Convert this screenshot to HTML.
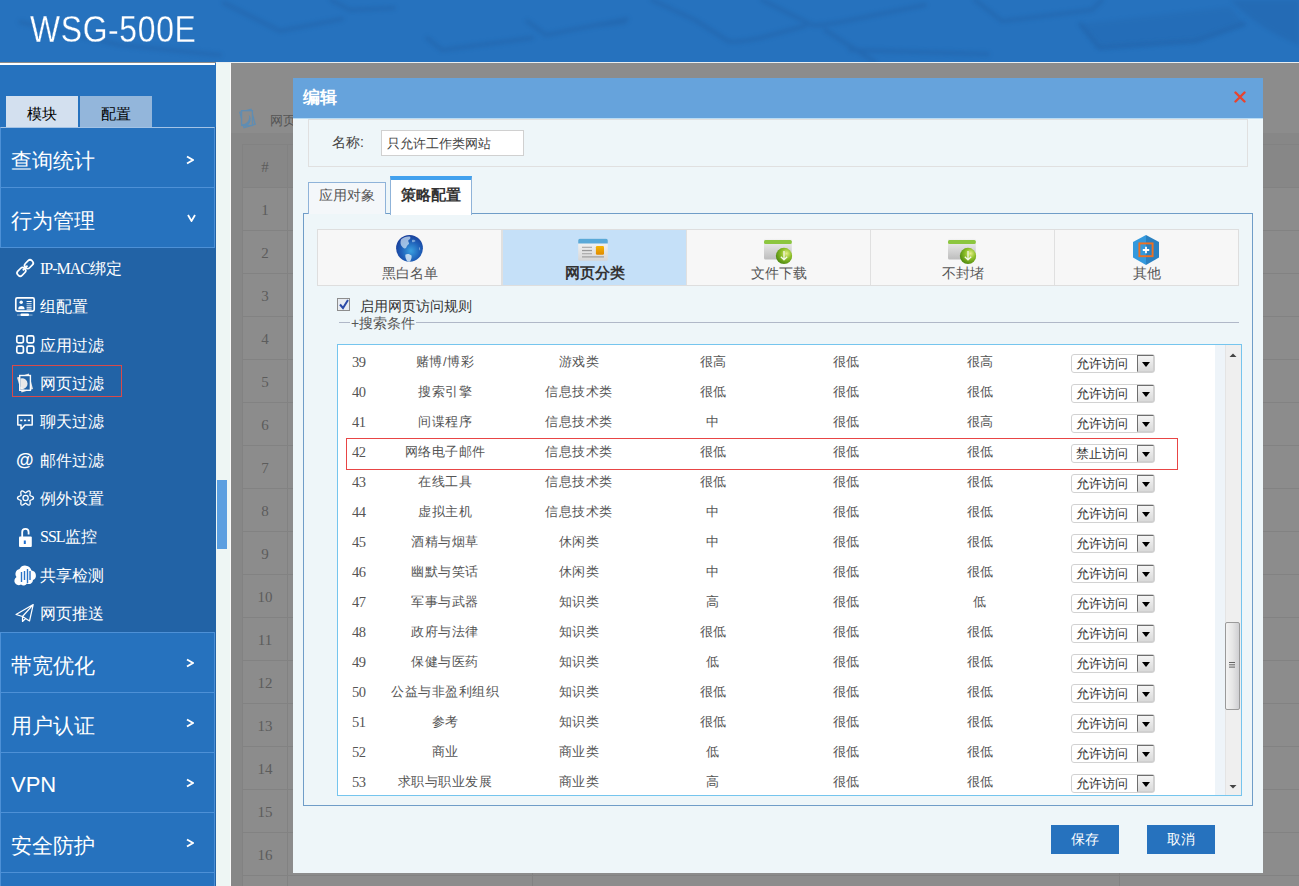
<!DOCTYPE html>
<html><head><meta charset="utf-8">
<style>
*{margin:0;padding:0;box-sizing:border-box}
html,body{width:1299px;height:886px;overflow:hidden;background:#8c8c8c;font-family:"Liberation Sans",sans-serif}
.a{position:absolute}
#hdr{left:0;top:0;width:1299px;height:62px;background:#2672be;overflow:hidden}
#title{left:30px;top:9px;font-size:37px;color:#fff;white-space:nowrap;transform:scaleX(0.86);transform-origin:0 0;letter-spacing:0.8px;-webkit-text-stroke:0.3px #2672be}
#side{left:0;top:63px;width:216px;height:823px;background:#2263a6}
#sidetop{left:0;top:63px;width:216px;height:64px;background:#2672be}
#wline{left:0;top:63px;width:215px;height:2px;background:#fff}
.tab{top:96px;height:31px;font-size:15px;color:#000;text-align:center;line-height:35px}
.mi{left:0;width:215px;height:61px;border:1px solid #4d90d6;background:#2672be;color:#fff;font-size:21px}
.mi .t{position:absolute;left:10px;top:19px;white-space:nowrap}
.mi .ar{position:absolute;left:185px;top:27px;line-height:0}
#sub{left:0;top:248px;width:216px;height:384px;background:#2263a6}
.si{position:absolute;left:0;width:216px;height:38px;color:#fff;font-size:16px}
.si .t{position:absolute;left:40px;top:11px;white-space:nowrap}
.si .t b{font-weight:normal;font-family:'Liberation Serif',serif;font-size:16px;letter-spacing:-1px}
.si svg{position:absolute}
#strip{left:216px;top:62px;width:14px;height:824px;background:#eef6f4}
#wl2{left:230px;top:63px;width:1px;height:823px;background:#fafafa}
#handle{left:217px;top:480px;width:10px;height:69px;background:#5b9fe0}
/* background page */
#main{left:231px;top:63px;width:1068px;height:823px;background:#878787;overflow:hidden}
.bgr{position:absolute;left:11px;width:1100px;height:44px;border:1px solid #828282;background:#8c8c8c}
.bgr.hd{background:#878787}
.bgr span{position:absolute;left:0;width:44px;top:14px;text-align:center;font-family:"Liberation Serif",serif;font-size:15px;color:#5c5c5c}
.bgr:before{content:"";position:absolute;left:44px;top:0;width:1px;height:43px;background:#828282}
.bgr:after{content:"";position:absolute;left:289px;top:0;width:1px;height:43px;background:#828282}
#vl3{left:888px;top:81px;width:1px;height:800px;background:#828282}
/* dialog */
#dlg{left:293px;top:78px;width:970px;height:795px;background:#eef6f9;overflow:hidden}
#dh{left:0;top:0;width:970px;height:41px;background:#66a3dc;border-bottom:1px solid #b9dcf5}
#dt{left:10px;top:8px;font-size:17px;font-weight:bold;color:#fff}
#close{left:941px;top:13px}
#fs{left:15px;top:41px;width:940px;height:48px;border:1px solid #e0e0e0}
#lbl{left:39px;top:56px;font-size:14px;color:#444}
#inp{left:88px;top:52px;width:143px;height:26px;background:#fff;border:1px solid #d0d0d0;font-size:13px;color:#444;padding:4px 0 0 5px}
.tb{position:absolute;height:32px;border:1px solid #8fb3d9;border-bottom:none;text-align:center}
#tb1{left:15px;top:104px;width:78px;background:#f4f7fa;font-size:14px;color:#555;line-height:24px}
#tb2{left:97px;top:98px;width:82px;height:39px;background:#fff;border-top:4px solid #41a1ee;font-size:15px;font-weight:bold;color:#333;line-height:30px}
#panel{left:10px;top:135px;width:950px;height:593px;border:1px solid #6f9dc8}
#grid{left:24px;top:151px;width:922px;height:57px;border:1px solid #dedede;background:#f7f7f7}
.cell{position:absolute;top:0;height:55px;border-right:1px solid #e0e0e0;text-align:center;font-size:14px;color:#555}
.cell .lab{position:absolute;left:0;right:0;top:35px}
.cell svg{position:absolute;left:50%;top:5px;transform:translateX(-50%)}
#cb{left:44px;top:220px;width:13px;height:13px;border:1px solid #8d8d8d;background:#e8ecf2}
#cbt{left:67px;top:220px;font-size:14px;color:#333}
#lg1{left:46px;top:244px;width:11px;height:1px;background:#b0b8c8}
#lg2{left:123px;top:244px;width:823px;height:1px;background:#b0b8c8}
#lgt{left:58px;top:237px;font-size:14px;color:#555}
#tbox{left:44px;top:266px;width:905px;height:452px;border:1px solid #75c5ee;background:#fff;overflow:hidden}
#strip2{left:877px;top:0;width:10px;height:450px;background:#eef4f9}
#sbar{left:887px;top:0;width:16px;height:450px;background:#efefef;border-left:1px solid #e4e4e4}
#thumb{left:887px;top:277px;width:15px;height:88px;border:1px solid #9a9a9a;border-radius:2px;background:linear-gradient(90deg,#f3f3f3,#e6e6e6 50%,#cfcfd2)}
.tr{position:absolute;left:0;width:877px;height:30px;font-size:13px;color:#555}
.tr span{position:absolute;top:0;line-height:30px;white-space:nowrap}
.tr .n{left:14px;font-family:"Liberation Serif",serif;font-size:14.5px;color:#555;letter-spacing:-0.5px}
.tr .c{width:134px;text-align:center;letter-spacing:0.5px}
.sel{left:733px;top:7px!important;width:84px;height:19px;border:1px solid #d2d2d2;border-radius:3px;line-height:18px!important;padding-left:4px;font-size:13px;color:#333;background:#fff}
.sel i{position:absolute;right:0;top:0;width:17px;height:17px;border:1px solid #6e6e6e;border-right-color:#cfcfcf;border-bottom-color:#cfcfcf;background:linear-gradient(#f5f5f5,#d9d9d9)}
.sel i:after{content:"";position:absolute;left:4px;top:6px;border-left:4px solid transparent;border-right:4px solid transparent;border-top:5px solid #000}
#red{left:53px;top:360px;width:832px;height:32px;border:1px solid #e84545}
.btn{position:absolute;top:747px;width:68px;height:29px;background:#2672be;color:#fff;font-size:14px;text-align:center;line-height:29px}
</style></head><body>
<div id="hdr" class="a"><svg class="a" style="left:0;top:0" width="1299" height="62"><defs><filter id="bl" x="-20%" y="-50%" width="140%" height="200%"><feGaussianBlur stdDeviation="2.2"/></filter></defs>
<g fill="none" stroke="#1a4f8f" stroke-width="4" stroke-linecap="round" stroke-linejoin="round" opacity="0.25" filter="url(#bl)">
<path d="M20 22L120 45L220 55"/><path d="M224 3L280 31L342 19"/><path d="M331 0L350 10L394 8"/><path d="M427 38L442 50L532 38"/><path d="M527 21L546 35L627 19"/>
<path d="M652 0L695 20L728 41Q735 43 760 38L805 26"/><path d="M762 0L812 25Q820 27 875 15L925 5"/><path d="M825 30L875 62"/><path d="M600 25L625 22"/>
<path d="M975 0L1002 21L1092 10L1102 0"/><path d="M1080 24L1099 48L1196 41L1244 24"/><path d="M850 50L988 54"/>
</g>
<path d="M1080 24L1230 7L1244 24L1196 41L1099 48Z" fill="#1a4f8f" opacity="0.12" filter="url(#bl)"/>
<path d="M1230 0H1299V45Q1260 30 1230 0Z" fill="#1a4f8f" opacity="0.18" filter="url(#bl)"/>
</svg><div id="title" class="a">WSG-500E</div></div>
<div id="side" class="a"></div><div id="sidetop" class="a"></div>
<div id="wline" class="a"></div>
<div class="a tab" style="left:6px;width:72px;background:#d3e0ef">模块</div>
<div class="a tab" style="left:80px;width:72px;background:#93b6db">配置</div>
<div class="a mi" style="top:127px;border-top-color:#a3c3e6"><span class="t">查询统计</span><span class="ar"><svg width="8" height="10" viewBox="0 0 8 10"><path d="M1 1.5L7 5L1 8.5" stroke="#fff" stroke-width="1.9" fill="none"/></svg></span></div>
<div class="a mi" style="top:187px"><span class="t">行为管理</span><span class="ar" style="top:26px;left:186px"><svg width="9" height="8" viewBox="0 0 9 8"><path d="M1 1L4.5 7L8 1" stroke="#fff" stroke-width="1.8" fill="none"/></svg></span></div>
<div id="sub" class="a">
 <div class="si" style="top:0px"><span class="t"><b>IP-MAC</b>绑定</span></div>
 <div class="si" style="top:38px"><span class="t">组配置</span></div>
 <div class="si" style="top:77px"><span class="t">应用过滤</span></div>
 <div class="si" style="top:115px"><span class="t">网页过滤</span></div>
 <div class="si" style="top:153px"><span class="t">聊天过滤</span></div>
 <div class="si" style="top:192px"><span class="t">邮件过滤</span></div>
 <div class="si" style="top:230px"><span class="t">例外设置</span></div>
 <div class="si" style="top:268px"><span class="t"><b>SSL</b>监控</span></div>
 <div class="si" style="top:307px"><span class="t">共享检测</span></div>
 <div class="si" style="top:345px"><span class="t">网页推送</span></div>
 <div class="a" style="left:12px;top:117px;width:110px;height:32px;border:1px solid #d94a4a"></div>
</div>
<div class="a mi" style="top:632px"><span class="t">带宽优化</span><span class="ar" style="top:25px"><svg width="8" height="10" viewBox="0 0 8 10"><path d="M1 1.5L7 5L1 8.5" stroke="#fff" stroke-width="1.9" fill="none"/></svg></span></div>
<div class="a mi" style="top:692px"><span class="t">用户认证</span><span class="ar" style="top:25px"><svg width="8" height="10" viewBox="0 0 8 10"><path d="M1 1.5L7 5L1 8.5" stroke="#fff" stroke-width="1.9" fill="none"/></svg></span></div>
<div class="a mi" style="top:752px"><span class="t" style="font-size:22px;top:19px">VPN</span><span class="ar" style="top:25px"><svg width="8" height="10" viewBox="0 0 8 10"><path d="M1 1.5L7 5L1 8.5" stroke="#fff" stroke-width="1.9" fill="none"/></svg></span></div>
<div class="a mi" style="top:812px"><span class="t">安全防护</span><span class="ar" style="top:25px"><svg width="8" height="10" viewBox="0 0 8 10"><path d="M1 1.5L7 5L1 8.5" stroke="#fff" stroke-width="1.9" fill="none"/></svg></span></div>
<div class="a mi" style="top:872px"></div>
<div id="strip" class="a"></div>
<div id="wl2" class="a"></div>
<div id="handle" class="a"></div>
<div class="a" style="left:216px;top:62px;width:1083px;height:1px;background:#e9eef0;z-index:2"></div>
<div id="main" class="a">
 <div class="a" style="left:0;top:0;width:1068px;height:70px;background:#8c8c8c"></div>
 <div class="a" style="left:39px;top:49px;font-size:13px;color:#555">网页过滤</div>
<div class="bgr hd" style="top:81px"><span>#</span></div>
<div class="bgr" style="top:124px"><span>1</span></div>
<div class="bgr" style="top:167px"><span>2</span></div>
<div class="bgr" style="top:210px"><span>3</span></div>
<div class="bgr" style="top:253px"><span>4</span></div>
<div class="bgr" style="top:296px"><span>5</span></div>
<div class="bgr" style="top:339px"><span>6</span></div>
<div class="bgr" style="top:382px"><span>7</span></div>
<div class="bgr" style="top:425px"><span>8</span></div>
<div class="bgr" style="top:468px"><span>9</span></div>
<div class="bgr" style="top:511px"><span>10</span></div>
<div class="bgr" style="top:554px"><span>11</span></div>
<div class="bgr" style="top:597px"><span>12</span></div>
<div class="bgr" style="top:640px"><span>13</span></div>
<div class="bgr" style="top:683px"><span>14</span></div>
<div class="bgr" style="top:726px"><span>15</span></div>
<div class="bgr" style="top:769px"><span>16</span></div>
<div class="bgr" style="top:812px"><span></span></div> <div id="vl3" class="a"></div>
</div>
<div id="dlg" class="a">
 <div id="dh" class="a"><div id="dt" class="a">编辑</div>
  <svg id="close" class="a" width="12" height="12" viewBox="0 0 12 12"><path d="M1.5 1.5L10.5 10.5M10.5 1.5L1.5 10.5" stroke="#e8432f" stroke-width="2.4" stroke-linecap="round"/></svg>
 </div>
 <div id="fs" class="a"></div>
 <div id="lbl" class="a">名称:</div>
 <div id="inp" class="a">只允许工作类网站</div>
 <div id="panel" class="a"></div>
 <div id="tb1" class="tb">应用对象</div>
 <div id="tb2" class="tb">策略配置</div>
 <div id="grid" class="a">
  <div class="cell" style="left:0;width:184px"><span class="lab">黑白名单</span></div>
  <div class="cell" style="left:184px;width:185px;background:#c5e0f8;border-left:1px solid #e0e0e0"><span class="lab" style="font-weight:bold;color:#333;font-size:15px;top:34px">网页分类</span></div>
  <div class="cell" style="left:369px;width:184px"><span class="lab">文件下载</span></div>
  <div class="cell" style="left:553px;width:184px"><span class="lab">不封堵</span></div>
  <div class="cell" style="left:737px;width:184px;border-right:none"><span class="lab">其他</span></div>
 </div>
 <div id="cb" class="a"></div>
 <div id="cbt" class="a">启用网页访问规则</div>
 <div id="lg1" class="a"></div><div id="lg2" class="a"></div>
 <div id="lgt" class="a">+搜索条件</div>
 <div id="tbox" class="a">
<div class="tr" style="top:2px"><span class="n">39</span><span class="c" style="left:40px">赌博/博彩</span><span class="c" style="left:174px">游戏类</span><span class="c" style="left:308px">很高</span><span class="c" style="left:441px">很低</span><span class="c" style="left:575px">很高</span><span class="sel">允许访问<i></i></span></div>
<div class="tr" style="top:32px"><span class="n">40</span><span class="c" style="left:40px">搜索引擎</span><span class="c" style="left:174px">信息技术类</span><span class="c" style="left:308px">很低</span><span class="c" style="left:441px">很低</span><span class="c" style="left:575px">很低</span><span class="sel">允许访问<i></i></span></div>
<div class="tr" style="top:62px"><span class="n">41</span><span class="c" style="left:40px">间谍程序</span><span class="c" style="left:174px">信息技术类</span><span class="c" style="left:308px">中</span><span class="c" style="left:441px">很低</span><span class="c" style="left:575px">很高</span><span class="sel">允许访问<i></i></span></div>
<div class="tr" style="top:92px"><span class="n">42</span><span class="c" style="left:40px">网络电子邮件</span><span class="c" style="left:174px">信息技术类</span><span class="c" style="left:308px">很低</span><span class="c" style="left:441px">很低</span><span class="c" style="left:575px">很低</span><span class="sel">禁止访问<i></i></span></div>
<div class="tr" style="top:122px"><span class="n">43</span><span class="c" style="left:40px">在线工具</span><span class="c" style="left:174px">信息技术类</span><span class="c" style="left:308px">很低</span><span class="c" style="left:441px">很低</span><span class="c" style="left:575px">很低</span><span class="sel">允许访问<i></i></span></div>
<div class="tr" style="top:152px"><span class="n">44</span><span class="c" style="left:40px">虚拟主机</span><span class="c" style="left:174px">信息技术类</span><span class="c" style="left:308px">中</span><span class="c" style="left:441px">很低</span><span class="c" style="left:575px">很低</span><span class="sel">允许访问<i></i></span></div>
<div class="tr" style="top:182px"><span class="n">45</span><span class="c" style="left:40px">酒精与烟草</span><span class="c" style="left:174px">休闲类</span><span class="c" style="left:308px">中</span><span class="c" style="left:441px">很低</span><span class="c" style="left:575px">很低</span><span class="sel">允许访问<i></i></span></div>
<div class="tr" style="top:212px"><span class="n">46</span><span class="c" style="left:40px">幽默与笑话</span><span class="c" style="left:174px">休闲类</span><span class="c" style="left:308px">中</span><span class="c" style="left:441px">很低</span><span class="c" style="left:575px">很低</span><span class="sel">允许访问<i></i></span></div>
<div class="tr" style="top:242px"><span class="n">47</span><span class="c" style="left:40px">军事与武器</span><span class="c" style="left:174px">知识类</span><span class="c" style="left:308px">高</span><span class="c" style="left:441px">很低</span><span class="c" style="left:575px">低</span><span class="sel">允许访问<i></i></span></div>
<div class="tr" style="top:272px"><span class="n">48</span><span class="c" style="left:40px">政府与法律</span><span class="c" style="left:174px">知识类</span><span class="c" style="left:308px">很低</span><span class="c" style="left:441px">很低</span><span class="c" style="left:575px">很低</span><span class="sel">允许访问<i></i></span></div>
<div class="tr" style="top:302px"><span class="n">49</span><span class="c" style="left:40px">保健与医药</span><span class="c" style="left:174px">知识类</span><span class="c" style="left:308px">低</span><span class="c" style="left:441px">很低</span><span class="c" style="left:575px">很低</span><span class="sel">允许访问<i></i></span></div>
<div class="tr" style="top:332px"><span class="n">50</span><span class="c" style="left:40px">公益与非盈利组织</span><span class="c" style="left:174px">知识类</span><span class="c" style="left:308px">很低</span><span class="c" style="left:441px">很低</span><span class="c" style="left:575px">很低</span><span class="sel">允许访问<i></i></span></div>
<div class="tr" style="top:362px"><span class="n">51</span><span class="c" style="left:40px">参考</span><span class="c" style="left:174px">知识类</span><span class="c" style="left:308px">很低</span><span class="c" style="left:441px">很低</span><span class="c" style="left:575px">很低</span><span class="sel">允许访问<i></i></span></div>
<div class="tr" style="top:392px"><span class="n">52</span><span class="c" style="left:40px">商业</span><span class="c" style="left:174px">商业类</span><span class="c" style="left:308px">低</span><span class="c" style="left:441px">很低</span><span class="c" style="left:575px">很低</span><span class="sel">允许访问<i></i></span></div>
<div class="tr" style="top:422px"><span class="n">53</span><span class="c" style="left:40px">求职与职业发展</span><span class="c" style="left:174px">商业类</span><span class="c" style="left:308px">高</span><span class="c" style="left:441px">很低</span><span class="c" style="left:575px">很低</span><span class="sel">允许访问<i></i></span></div>  <div id="strip2" class="a"></div>
  <div id="sbar" class="a"></div>
  <div id="thumb" class="a"></div>
 </div>
 <div id="red" class="a"></div>
 <div class="btn" style="left:758px">保存</div>
 <div class="btn" style="left:854px">取消</div>
</div>

<svg class="a" style="left:0;top:0" width="1299" height="886" viewBox="0 0 1299 886">
<defs>
 <radialGradient id="gl" cx="0.55" cy="0.6" r="0.6"><stop offset="0" stop-color="#3aa0e0"/><stop offset="0.6" stop-color="#1e5fb8"/><stop offset="1" stop-color="#1a3f9a"/></radialGradient>
 <linearGradient id="pg" x1="0" y1="0" x2="0" y2="1"><stop offset="0" stop-color="#f8f8f8"/><stop offset="1" stop-color="#d6d6d6"/></linearGradient>
 <linearGradient id="og" x1="0" y1="0" x2="0" y2="1"><stop offset="0" stop-color="#f5b400"/><stop offset="1" stop-color="#e08a00"/></linearGradient>
 <radialGradient id="gc" cx="0.65" cy="0.35" r="0.7"><stop offset="0" stop-color="#e6f08a"/><stop offset="0.45" stop-color="#8fc02a"/><stop offset="1" stop-color="#4f8a10"/></radialGradient>
 <linearGradient id="bx" x1="0" y1="0" x2="0" y2="1"><stop offset="0" stop-color="#f4f4f4"/><stop offset="1" stop-color="#bdbdbd"/></linearGradient>
</defs>
<!-- sidebar icons -->
<g fill="none" stroke="#fff" stroke-width="1.7">
 <rect x="-4.6" y="-3" width="9.2" height="6" rx="2.6" transform="translate(28.9 264.2) rotate(-45)"/>
 <rect x="-4.6" y="-3" width="9.2" height="6" rx="2.6" transform="translate(21.4 271.8) rotate(-45)"/>
 <path d="M22.8 270.4L27.5 265.6"/>
 <rect x="15.8" y="297.9" width="18.4" height="13.2" rx="1.5"/>
 <rect x="16.8" y="335.8" width="6.6" height="7" rx="1.6"/>
 <rect x="27" y="335.8" width="6.8" height="7" rx="1.6"/>
 <rect x="16.8" y="346.1" width="6.6" height="7" rx="1.6"/>
 <rect x="27" y="346.1" width="6.8" height="7" rx="1.6"/>
 <path d="M17.8 415.3H32.2V425H25L21 429.2V425H17.8Z" stroke-width="1.5" stroke-linejoin="round"/>
 <path d="M33.50 498.00 L33.42 498.42 L33.19 498.81 L32.83 499.16 L32.38 499.46 L31.88 499.71 L31.37 499.91 L30.89 500.07 L30.49 500.22 L30.19 500.39 L30.00 500.60 L29.92 500.87 L29.92 501.21 L29.99 501.64 L30.08 502.13 L30.17 502.67 L30.21 503.23 L30.17 503.77 L30.05 504.26 L29.82 504.65 L29.50 504.93 L29.10 505.07 L28.65 505.06 L28.16 504.93 L27.67 504.69 L27.21 504.38 L26.78 504.03 L26.40 503.71 L26.07 503.44 L25.78 503.26 L25.50 503.20 L25.22 503.26 L24.93 503.44 L24.60 503.71 L24.22 504.03 L23.79 504.38 L23.33 504.69 L22.84 504.93 L22.35 505.06 L21.90 505.07 L21.50 504.93 L21.18 504.65 L20.95 504.26 L20.83 503.77 L20.79 503.23 L20.83 502.67 L20.92 502.13 L21.01 501.64 L21.08 501.21 L21.08 500.87 L21.00 500.60 L20.81 500.39 L20.51 500.22 L20.11 500.07 L19.63 499.91 L19.12 499.71 L18.62 499.46 L18.17 499.16 L17.81 498.81 L17.58 498.42 L17.50 498.00 L17.58 497.58 L17.81 497.19 L18.17 496.84 L18.62 496.54 L19.12 496.29 L19.63 496.09 L20.11 495.93 L20.51 495.78 L20.81 495.61 L21.00 495.40 L21.08 495.13 L21.08 494.79 L21.01 494.36 L20.92 493.87 L20.83 493.33 L20.79 492.77 L20.83 492.23 L20.95 491.74 L21.18 491.35 L21.50 491.07 L21.90 490.93 L22.35 490.94 L22.84 491.07 L23.33 491.31 L23.79 491.62 L24.22 491.97 L24.60 492.29 L24.93 492.56 L25.22 492.74 L25.50 492.80 L25.78 492.74 L26.07 492.56 L26.40 492.29 L26.78 491.97 L27.21 491.62 L27.67 491.31 L28.16 491.07 L28.65 490.94 L29.10 490.93 L29.50 491.07 L29.82 491.35 L30.05 491.74 L30.17 492.23 L30.21 492.77 L30.17 493.33 L30.08 493.87 L29.99 494.36 L29.92 494.79 L29.92 495.13 L30.00 495.40 L30.19 495.61 L30.49 495.78 L30.89 495.93 L31.37 496.09 L31.88 496.29 L32.38 496.54 L32.83 496.84 L33.19 497.19 L33.42 497.58 L33.50 498.00Z" stroke-width="1.3"/>
 <circle cx="25.6" cy="498" r="2.6" stroke-width="1.3"/>
 <path d="M22.2 537V532a3.2 3.2 0 0 1 6.4 0V534.5" stroke-width="1.8"/>
 <path d="M16 614.5L33.2 604.6L29.5 621L22.5 616.5Z M22.5 616.5L33.2 604.6 M22.5 616.5V621.5L25.5 618.5" stroke-width="1.2" stroke-linejoin="round"/>
</g>
<g fill="#fff">
 <rect x="20.5" y="313.5" width="8.5" height="2.5" rx="1"/>
 <rect x="17" y="314.6" width="15.5" height="0.9" opacity="0.6"/>
 <circle cx="21.2" cy="302.3" r="1.7"/>
 <path d="M18.2 309.2a3.2 3.2 0 0 1 6.4 0Z"/>
 <rect x="26.6" y="301" width="5" height="1"/><rect x="26.6" y="303" width="5" height="1" opacity=".7"/><rect x="26.6" y="304.8" width="5" height="1" opacity=".7"/><rect x="26.6" y="306.8" width="5" height="1"/><rect x="26.6" y="308.6" width="5" height="1"/>
 <rect x="20.2" y="419.6" width="2.2" height="1.6"/><rect x="24" y="419.6" width="2.2" height="1.6"/><rect x="27.8" y="419.6" width="2.2" height="1.6"/>
 <rect x="19" y="536.5" width="12.8" height="10.4" rx="1"/>
 <path d="M16.5 577a5 5 0 0 1 3 -8a6.5 6.5 0 0 1 12 1.5a5 5 0 0 1 1.5 9.5a4 4 0 0 1 -6 3.5a4 4 0 0 1 -6 1a4 4 0 0 1 -4.5 -7.5Z"/>
</g>
<text x="16" y="466" font-family="Liberation Sans" font-size="18" font-weight="bold" fill="#fff">@</text>
<rect x="23.8" y="540.5" width="2" height="3.5" fill="#1e6fd0"/>
<g stroke="#2b74c8" stroke-width="1.4" fill="none"><path d="M21.5 572V582M24.5 571V580M27.5 569V583M30 571V580"/></g>
<!-- web filter page icon -->
<path d="M17 377.5L28.8 373.5L33 389L21.5 392.4Z" fill="#e6e6e6"/>
<rect x="19" y="374.8" width="12.1" height="16.2" fill="#fafafa"/>
<rect x="20.4" y="376.2" width="9.3" height="13.4" fill="#2263a6"/>
<path d="M20.4 378.6A5.4 5.4 0 1 1 20.4 388.8Z" fill="#e9e9e9"/>
<path d="M20.4 386.5Q24 390 27 389.6V389.6H20.4Z" fill="#f4f4f4"/>
<!-- grid icons -->
<circle cx="409.5" cy="248.3" r="13.4" fill="url(#gl)"/>
<path d="M401 239.5c2.5-2.5 6-3.5 9-3c1 1.5 0 3 -1.5 3.5c-1 1.5 1 2.5 0.5 4c-1.5 1 -2.5 2.5 -3 4c-1.5 1 -3 0 -4 -1.5c-1.5 -1.5 -2 -4 -1 -7Z" fill="#c8def2" opacity="0.75"/>
<path d="M405.5 254.5c2 -1 4.5 -0.5 6 1c0.5 2 -0.5 4.5 -1.5 6c-1.5 0.5 -3 0 -3.5 -1.5c-1 -1.5 -1.5 -3.5 -1 -5.5Z" fill="#d6e8f6" opacity="0.85"/>
<path d="M412 240c1.5 -0.5 3 0 3.5 1c-0.5 1 -2 1.5 -3.5 1Z M419 247c1 0.5 1.5 2 1 3.5c-0.8 -0.5 -1.2 -2 -1 -3.5Z" fill="#9cc0e6" opacity="0.7"/>
<rect x="578.2" y="238.7" width="29.6" height="22" rx="1.5" fill="url(#pg)"/>
<path d="M578.2 243.5V240.2a1.5 1.5 0 0 1 1.5 -1.5H606.3a1.5 1.5 0 0 1 1.5 1.5V243.5Z" fill="#5aa9d8"/>
<g fill="#b0b0b0"><rect x="582" y="246.7" width="10" height="1.3"/><rect x="582" y="249.9" width="10" height="1.3" fill="#999"/><rect x="582" y="253" width="10" height="1.3"/><rect x="582" y="256" width="22" height="1.7"/></g>
<rect x="595.9" y="246" width="8.1" height="8.8" rx="1.2" fill="url(#og)"/>
<g id="dl">
 <rect x="764" y="238.5" width="27.8" height="21" rx="1.5" fill="url(#bx)"/>
 <rect x="764" y="240" width="27.8" height="4" rx="1.5" fill="#8cc63f"/>
 <circle cx="784" cy="255.9" r="8.1" fill="url(#gc)"/>
 <path d="M784 251V259.5M780.8 256.8L784 259.8L787.2 256.8" stroke="#f4f8e8" stroke-width="1.3" fill="none"/>
</g>
<use href="#dl" x="184"/>
<path d="M1146 235L1159 242V257.5L1146 265Z" fill="#2a80c0"/>
<path d="M1146 235L1133 242V257.5L1146 265Z" fill="#3399dd"/>
<rect x="1139.4" y="243.4" width="13.2" height="12.8" fill="none" stroke="#f07020" stroke-width="1.9"/>
<path d="M1146 246.8V253.2M1142.8 250H1149.2" stroke="#fff" stroke-width="1.8"/>
<!-- checkbox check -->
<path d="M340 304.5L343 308L348 300" stroke="#2b4aa8" stroke-width="2" fill="none"/>
<!-- scrollbar arrows and grip -->
<path d="M1229.5 357L1233 353.5L1236.5 357Z" fill="#444"/>
<path d="M1229.5 785L1233 788.5L1236.5 785Z" fill="#444"/>
<g stroke="#555" stroke-width="0.9"><path d="M1229 662.5H1235M1229 664.8H1235M1229 667.1H1235"/></g>
<!-- breadcrumb icon -->
<path d="M239.8 112.3L251 109.2L255.2 124.3L244 127.6Z" fill="#8a8a8a" stroke="#5f8db3" stroke-width="1.3"/>
<rect x="241.6" y="110.7" width="10.8" height="14.8" fill="#8c8c8c" stroke="#5f8db3" stroke-width="1.3"/>
<path d="M242 125.4H247.5L249.5 123.2a7 7 0 0 0 -1 -9a7 7 0 0 1 -6.5 10Z" fill="#5f8db3"/>
</svg>
</body></html>
